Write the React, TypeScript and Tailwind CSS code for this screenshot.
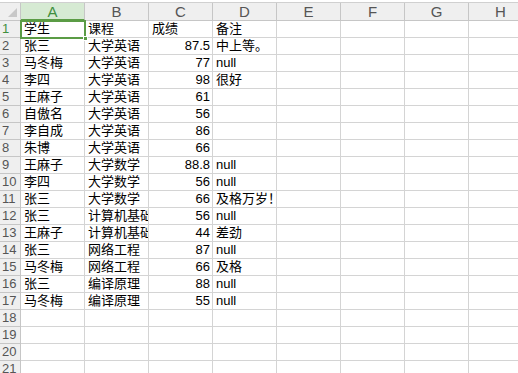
const COLS = ["A", "B", "C", "D", "E", "F", "G", "H"];

const DATA: [string, string, string, string][] = [
  ["学生", "课程", "成绩", "备注"],
  ["张三", "大学英语", "87.5", "中上等。"],
  ["马冬梅", "大学英语", "77", "null"],
  ["李四", "大学英语", "98", "很好"],
  ["王麻子", "大学英语", "61", ""],
  ["自傲名", "大学英语", "56", ""],
  ["李自成", "大学英语", "86", ""],
  ["朱博", "大学英语", "66", ""],
  ["王麻子", "大学数学", "88.8", "null"],
  ["李四", "大学数学", "56", "null"],
  ["张三", "大学数学", "66", "及格万岁！"],
  ["张三", "计算机基础", "56", "null"],
  ["王麻子", "计算机基础", "44", "差劲"],
  ["张三", "网络工程", "87", "null"],
  ["马冬梅", "网络工程", "66", "及格"],
  ["张三", "编译原理", "88", "null"],
  ["马冬梅", "编译原理", "55", "null"],
];

const font = "font-['Liberation_Sans','Noto_Sans_CJK_SC',sans-serif]";

function Row({ n, cells }: { n: number; cells: string[] }) {
  return (
    <div className="flex h-[17px]">
      <div
        className={`w-[21px] shrink-0 border-r border-b border-[#c6c6c6] bg-[#efefef] pl-[2px] text-[13px] leading-[16px] ${
          n === 1 ? "text-[#3f8f3f]" : "text-[#555]"
        }`}
      >
        {n}
      </div>
      {COLS.map((c, i) => {
        const v = cells[i] ?? "";
        const right = i === 2 && n > 1;
        const clip = i === 1;
        return (
          <div
            key={c}
            className={`relative w-[64px] shrink-0 border-r border-b border-[#d4d4d4] text-[13px] leading-[16px] text-black whitespace-nowrap ${
              right ? "text-right pr-[2px]" : "pl-[3px]"
            } ${clip ? "overflow-hidden" : ""} ${i === 3 ? "z-10" : ""}`}
          >
            {v}
          </div>
        );
      })}
    </div>
  );
}

export default function App() {
  const rows: string[][] = [];
  for (let i = 0; i < 21; i++) rows.push(DATA[i] ? [...DATA[i]] : []);

  return (
    <div className={`relative w-[518px] h-[373px] overflow-hidden bg-white ${font}`}>
      <div className="h-[2px] bg-white" />
      {/* column header */}
      <div className="flex h-[19px] border-t border-[#d0d0d0]">
        <div className="relative w-[21px] shrink-0 border-r border-b border-[#c6c6c6] bg-[#efefef]">
          <svg className="absolute right-[3px] bottom-[3px]" width="9" height="9" viewBox="0 0 9 9">
            <polygon points="9,0 9,9 0,9" fill="#c8c8c8" />
          </svg>
        </div>
        {COLS.map((c, i) => (
          <div
            key={c}
            className={`w-[64px] shrink-0 border-r border-[#c6c6c6] text-center text-[15px] leading-[18px] ${
              i === 0
                ? "bg-[#d6ead3] text-[#3f8f3f] border-b-2 border-b-[#5b9c45]"
                : "bg-[#efefef] text-[#555] border-b"
            }`}
          >
            {c}
          </div>
        ))}
      </div>
      {rows.map((r, i) => (
        <Row key={i} n={i + 1} cells={r} />
      ))}
      {/* selected cell A1 */}
      <div className="absolute left-[20px] top-[20px] w-[66px] h-[19px] border-2 border-[#5b9c45] pointer-events-none z-20" />
      <div className="absolute left-[83px] top-[36px] w-[5px] h-[5px] bg-[#5b9c45] border border-white z-30" />
    </div>
  );
}
